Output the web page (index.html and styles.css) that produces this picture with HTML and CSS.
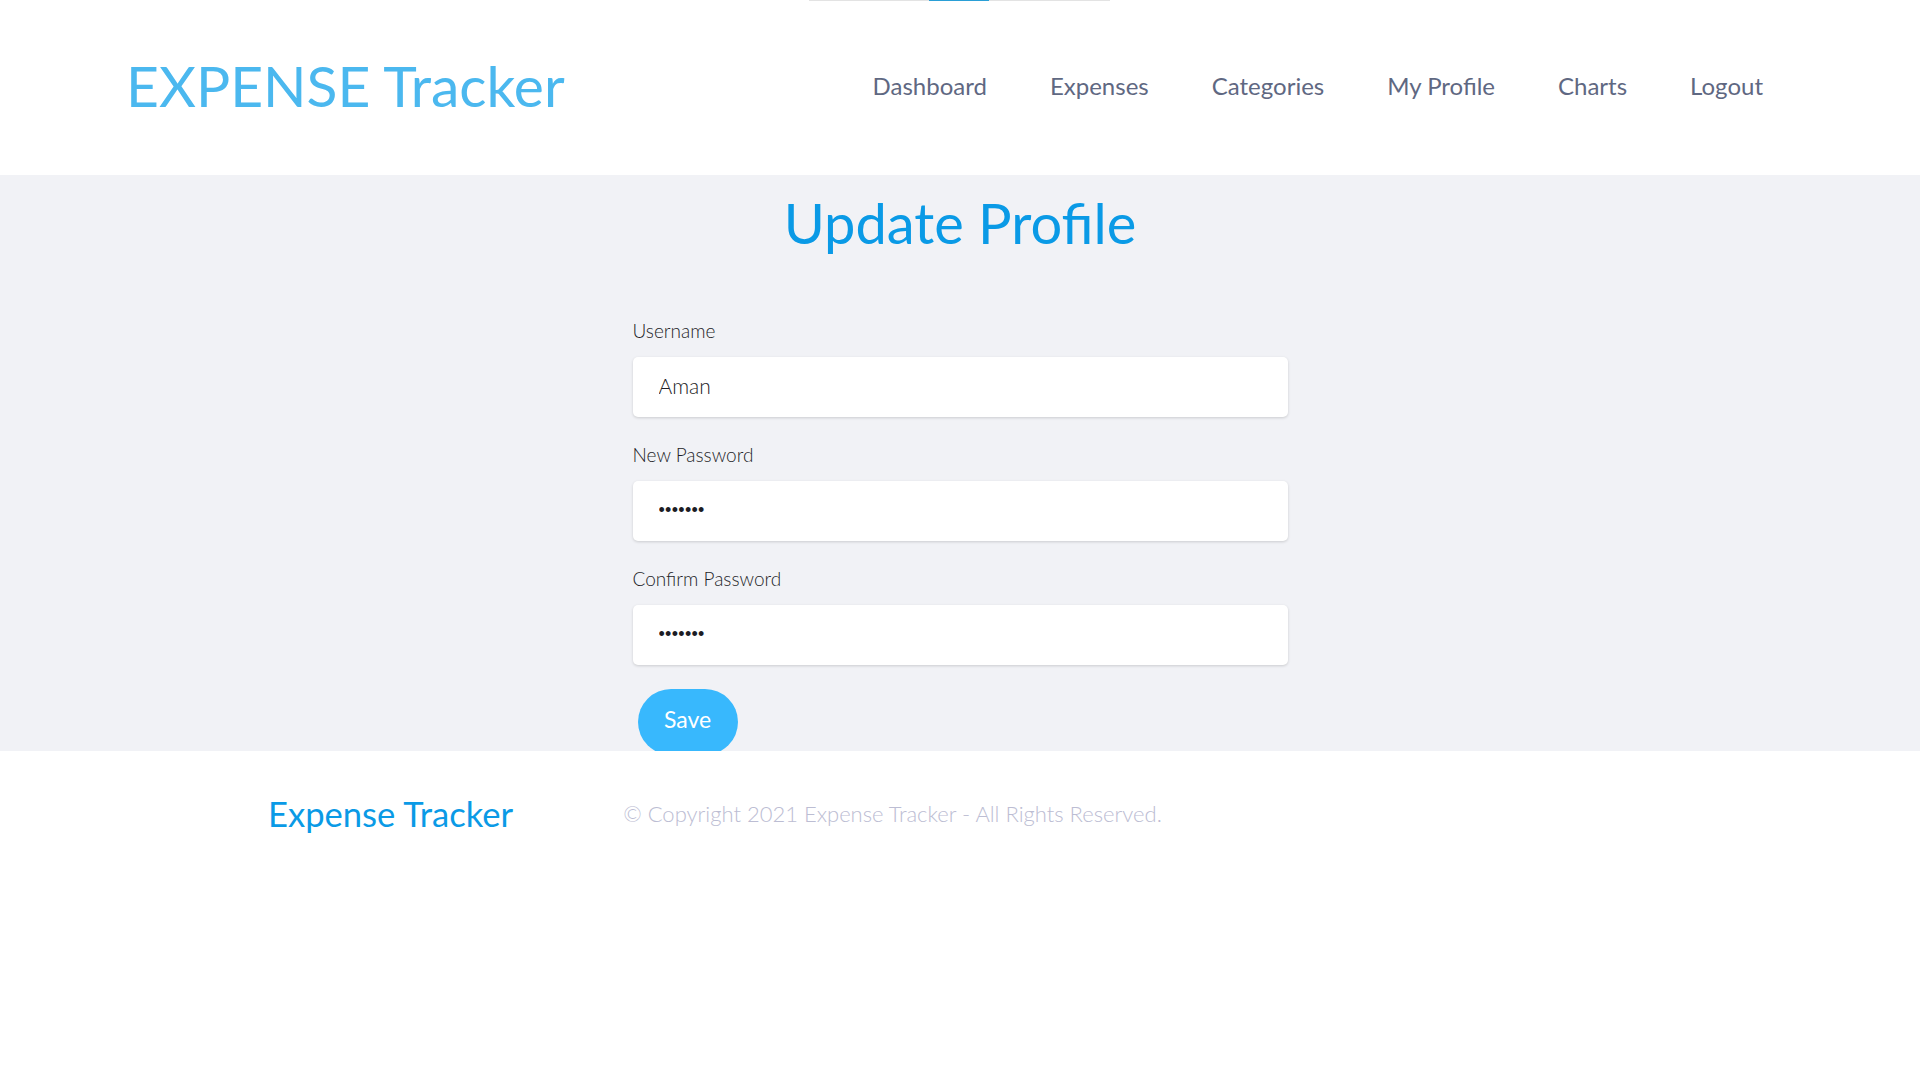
FILE: index.html
```html
<!DOCTYPE html>
<html lang="en">
<head>
<meta charset="utf-8">
<title>Expense Tracker - Update Profile</title>
<link rel="stylesheet" href="styles.css">
</head>
<body>
<div class="loader"><span class="loader-fill"></span></div>
<header class="site-header">
  <a class="logo" href="#">EXPENSE Tracker</a>
  <nav class="main-nav">
    <a href="#">Dashboard</a>
    <a href="#">Expenses</a>
    <a href="#">Categories</a>
    <a href="#">My Profile</a>
    <a href="#">Charts</a>
    <a href="#">Logout</a>
  </nav>
</header>
<main class="content">
  <h1 class="page-title">Update Profile</h1>
  <form class="profile-form">
    <div class="field">
      <label for="username">Username</label>
      <input id="username" type="text" value="Aman">
    </div>
    <div class="field">
      <label for="newpass">New Password</label>
      <input id="newpass" class="pass" type="password" value="1234567">
    </div>
    <div class="field">
      <label for="confpass">Confirm Password</label>
      <input id="confpass" class="pass" type="password" value="1234567">
    </div>
    <button type="button" class="save-btn">Save</button>
  </form>
</main>
<footer class="site-footer">
  <div class="footer-brand">Expense Tracker</div>
  <div class="copyright">© Copyright 2021 Expense Tracker - All Rights Reserved.</div>
</footer>
</body>
</html>
```
FILE: styles.css
```css
* { box-sizing: border-box; }
html, body { margin: 0; padding: 0; background: #ffffff; }
body { font-family: Lato, "Open Sans", sans-serif; position: relative; }

.loader {
  position: absolute;
  top: 0;
  left: 809px;
  width: 301px;
  height: 1px;
  background: #e3e3e3;
}
.loader-fill {
  position: absolute;
  left: 120px;
  top: 0;
  width: 60px;
  height: 1px;
  background: #2a9fd6;
}

.site-header {
  height: 175px;
  display: flex;
  align-items: center;
  padding: 0 157px 0 126px;
}
.logo {
  font-size: 57px;
  font-weight: 400;
  color: #4bb8ef;
  text-decoration: none;
  line-height: 1;
  margin-top: -4px;
}
.main-nav {
  margin-left: auto;
  display: flex;
  gap: 63px;
  margin-top: -5px;
}
.main-nav a {
  font-size: 24px;
  font-weight: 400;
  color: #5f6882;
  text-decoration: none;
}

.content {
  background: #f1f2f6;
  height: 576px;
  padding-top: 14px;
  overflow: hidden;
}
.page-title {
  margin: 0;
  text-align: center;
  font-size: 56px;
  font-weight: 400;
  line-height: 68px;
  color: #0a9ae6;
}
.profile-form {
  width: 655px;
  margin: 62px auto 0;
  display: flex;
  flex-direction: column;
}
.field {
  display: flex;
  flex-direction: column;
  margin-bottom: 26px;
}
.field:nth-child(3) { margin-bottom: 24px; }
.field label {
  font-size: 19px;
  font-weight: 300;
  line-height: 24px;
  color: #1e1e28;
  margin-bottom: 14px;
}
.field input {
  height: 60px;
  border: none;
  border-radius: 5px;
  background: #ffffff;
  box-shadow: 0 1px 3px rgba(0, 0, 0, 0.16);
  padding: 0 26px 4px;
  font-family: Lato, "Open Sans", sans-serif;
  font-weight: 300;
  font-size: 21px;
  color: #1c1c24;
  outline: none;
}
.field input.pass {
  font-family: "Liberation Sans", Arial, sans-serif;
  font-size: 18px;
  letter-spacing: 0.3px;
  padding-bottom: 2px;
}
.save-btn {
  align-self: flex-start;
  margin-left: 5px;
  width: 100px;
  height: 66px;
  border: none;
  border-radius: 33px;
  background: #38b8fd;
  color: #ffffff;
  font-family: Lato, "Open Sans", sans-serif;
  font-size: 23px;
  padding: 0 0 6px;
}

.site-footer {
  display: flex;
  align-items: center;
  gap: 110px;
  padding: 42px 0 0 268px;
}
.footer-brand {
  font-size: 34.6px;
  font-weight: 400;
  color: #0a9ae6;
}
.copyright {
  font-size: 22px;
  font-weight: 300;
  color: #bcbdd3;
}
```
